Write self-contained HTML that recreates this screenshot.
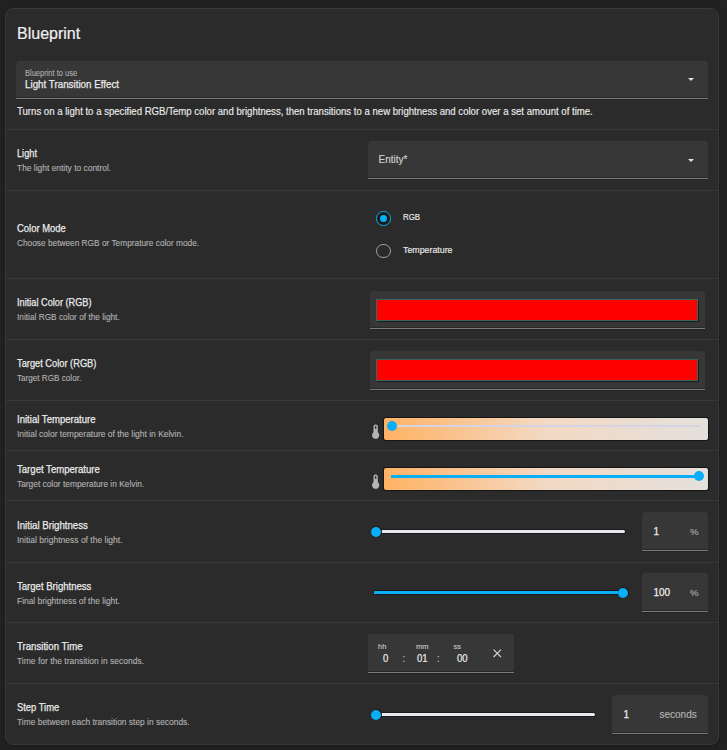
<!DOCTYPE html>
<html><head><meta charset="utf-8"><style>
html,body{margin:0;padding:0;}
body{width:727px;height:750px;background:#212121;position:relative;overflow:hidden;font-family:"Liberation Sans",sans-serif;}
.t{position:absolute;white-space:nowrap;}
</style></head><body>
<div style="position:absolute;left:5px;top:8px;width:714px;height:737px;box-sizing:border-box;border:1px solid #383838;border-radius:8px;background:#2b2b2b;box-shadow:0 1px 3px rgba(0,0,0,0.25)"></div>
<div class="t" style="left:17px;top:25.66px;font-size:16px;line-height:16px;color:#f0f0f0;font-weight:400;-webkit-text-stroke:0.2px #f0f0f0">Blueprint</div>
<div style="position:absolute;left:16px;top:60.6px;width:692px;height:38.2px;background:#373737;border-radius:4px 4px 0 0"></div>
<div style="position:absolute;left:16px;top:97.8px;width:692px;height:1px;background:#7a7a7a;box-shadow:0 -1px 0 #282828, 0 1px 0 #232323"></div>
<div class="t" style="left:25px;top:69.86px;font-size:8.2px;line-height:8.2px;color:#b0b0b0;font-weight:400;transform:scaleX(0.915);transform-origin:0 0;-webkit-text-stroke:0.1px #b0b0b0">Blueprint to use</div>
<div class="t" style="left:25px;top:79.03px;font-size:10.6px;line-height:10.6px;color:#ebebeb;font-weight:400;transform:scaleX(0.925);transform-origin:0 0;-webkit-text-stroke:0.25px #ebebeb">Light Transition Effect</div>
<div style="position:absolute;left:688.10px;top:77.8px;width:0;height:0;border-left:3.7px solid transparent;border-right:3.7px solid transparent;border-top:3.8px solid #e0e0e0"></div>
<div class="t" style="left:17px;top:105.61px;font-size:10.5px;line-height:10.5px;color:#ececec;font-weight:400;transform:scaleX(0.914);transform-origin:0 0;-webkit-text-stroke:0.15px #ececec">Turns on a light to a specified RGB/Temp color and brightness, then transitions to a new brightness and color over a set amount of time.</div>
<div style="position:absolute;left:6px;top:129px;width:712px;height:1px;background:#383838"></div>
<div style="position:absolute;left:6px;top:190px;width:712px;height:1px;background:#383838"></div>
<div style="position:absolute;left:6px;top:278px;width:712px;height:1px;background:#383838"></div>
<div style="position:absolute;left:6px;top:339px;width:712px;height:1px;background:#383838"></div>
<div style="position:absolute;left:6px;top:400px;width:712px;height:1px;background:#383838"></div>
<div style="position:absolute;left:6px;top:450px;width:712px;height:1px;background:#383838"></div>
<div style="position:absolute;left:6px;top:500px;width:712px;height:1px;background:#383838"></div>
<div style="position:absolute;left:6px;top:562px;width:712px;height:1px;background:#383838"></div>
<div style="position:absolute;left:6px;top:622px;width:712px;height:1px;background:#383838"></div>
<div style="position:absolute;left:6px;top:683px;width:712px;height:1px;background:#383838"></div>
<div class="t" style="left:17px;top:148.06px;font-size:10.8px;line-height:10.8px;color:#ececec;font-weight:400;transform:scaleX(0.8524);transform-origin:0 0;-webkit-text-stroke:0.25px #ececec">Light</div>
<div class="t" style="left:17px;top:164.48px;font-size:9.0px;line-height:9.0px;color:#b2b2b2;font-weight:400;transform:scaleX(0.9361);transform-origin:0 0;-webkit-text-stroke:0.12px #b2b2b2">The light entity to control.</div>
<div class="t" style="left:17px;top:222.56px;font-size:10.8px;line-height:10.8px;color:#ececec;font-weight:400;transform:scaleX(0.8746);transform-origin:0 0;-webkit-text-stroke:0.25px #ececec">Color Mode</div>
<div class="t" style="left:17px;top:238.98px;font-size:9.0px;line-height:9.0px;color:#b2b2b2;font-weight:400;transform:scaleX(0.9225);transform-origin:0 0;-webkit-text-stroke:0.12px #b2b2b2">Choose between RGB or Temprature color mode.</div>
<div class="t" style="left:17px;top:297.06px;font-size:10.8px;line-height:10.8px;color:#ececec;font-weight:400;transform:scaleX(0.8507);transform-origin:0 0;-webkit-text-stroke:0.25px #ececec">Initial Color (RGB)</div>
<div class="t" style="left:17px;top:313.48px;font-size:9.0px;line-height:9.0px;color:#b2b2b2;font-weight:400;transform:scaleX(0.9208);transform-origin:0 0;-webkit-text-stroke:0.12px #b2b2b2">Initial RGB color of the light.</div>
<div class="t" style="left:17px;top:358.06px;font-size:10.8px;line-height:10.8px;color:#ececec;font-weight:400;transform:scaleX(0.8592);transform-origin:0 0;-webkit-text-stroke:0.25px #ececec">Target Color (RGB)</div>
<div class="t" style="left:17px;top:374.48px;font-size:9.0px;line-height:9.0px;color:#b2b2b2;font-weight:400;transform:scaleX(0.9037);transform-origin:0 0;-webkit-text-stroke:0.12px #b2b2b2">Target RGB color.</div>
<div class="t" style="left:17px;top:413.56px;font-size:10.8px;line-height:10.8px;color:#ececec;font-weight:400;transform:scaleX(0.8872);transform-origin:0 0;-webkit-text-stroke:0.25px #ececec">Initial Temperature</div>
<div class="t" style="left:17px;top:429.98px;font-size:9.0px;line-height:9.0px;color:#b2b2b2;font-weight:400;transform:scaleX(0.9404);transform-origin:0 0;-webkit-text-stroke:0.12px #b2b2b2">Initial color temperature of the light in Kelvin.</div>
<div class="t" style="left:17px;top:463.56px;font-size:10.8px;line-height:10.8px;color:#ececec;font-weight:400;transform:scaleX(0.887);transform-origin:0 0;-webkit-text-stroke:0.25px #ececec">Target Temperature</div>
<div class="t" style="left:17px;top:479.98px;font-size:9.0px;line-height:9.0px;color:#b2b2b2;font-weight:400;transform:scaleX(0.9284);transform-origin:0 0;-webkit-text-stroke:0.12px #b2b2b2">Target color temperature in Kelvin.</div>
<div class="t" style="left:17px;top:519.56px;font-size:10.8px;line-height:10.8px;color:#ececec;font-weight:400;transform:scaleX(0.8952);transform-origin:0 0;-webkit-text-stroke:0.25px #ececec">Initial Brightness</div>
<div class="t" style="left:17px;top:535.98px;font-size:9.0px;line-height:9.0px;color:#b2b2b2;font-weight:400;transform:scaleX(0.946);transform-origin:0 0;-webkit-text-stroke:0.12px #b2b2b2">Initial brightness of the light.</div>
<div class="t" style="left:17px;top:580.56px;font-size:10.8px;line-height:10.8px;color:#ececec;font-weight:400;transform:scaleX(0.885);transform-origin:0 0;-webkit-text-stroke:0.25px #ececec">Target Brightness</div>
<div class="t" style="left:17px;top:596.98px;font-size:9.0px;line-height:9.0px;color:#b2b2b2;font-weight:400;transform:scaleX(0.9352);transform-origin:0 0;-webkit-text-stroke:0.12px #b2b2b2">Final brightness of the light.</div>
<div class="t" style="left:17px;top:641.06px;font-size:10.8px;line-height:10.8px;color:#ececec;font-weight:400;transform:scaleX(0.8934);transform-origin:0 0;-webkit-text-stroke:0.25px #ececec">Transition Time</div>
<div class="t" style="left:17px;top:657.48px;font-size:9.0px;line-height:9.0px;color:#b2b2b2;font-weight:400;transform:scaleX(0.943);transform-origin:0 0;-webkit-text-stroke:0.12px #b2b2b2">Time for the transition in seconds.</div>
<div class="t" style="left:17px;top:702.06px;font-size:10.8px;line-height:10.8px;color:#ececec;font-weight:400;transform:scaleX(0.8688);transform-origin:0 0;-webkit-text-stroke:0.25px #ececec">Step Time</div>
<div class="t" style="left:17px;top:718.48px;font-size:9.0px;line-height:9.0px;color:#b2b2b2;font-weight:400;transform:scaleX(0.9341);transform-origin:0 0;-webkit-text-stroke:0.12px #b2b2b2">Time between each transition step in seconds.</div>
<div style="position:absolute;left:368px;top:141px;width:340px;height:38px;background:#373737;border-radius:4px 4px 0 0"></div>
<div style="position:absolute;left:368px;top:178px;width:340px;height:1px;background:#7a7a7a;box-shadow:0 -1px 0 #282828, 0 1px 0 #232323"></div>
<div class="t" style="left:378.5px;top:154.53px;font-size:10px;line-height:10px;color:#cfcfcf;font-weight:400;-webkit-text-stroke:0.15px #cfcfcf">Entity*</div>
<div style="position:absolute;left:688.10px;top:159.2px;width:0;height:0;border-left:3.7px solid transparent;border-right:3.7px solid transparent;border-top:3.8px solid #e0e0e0"></div>
<div style="position:absolute;left:376.2px;top:211px;width:14.6px;height:14.6px;box-sizing:border-box;border:1.9px solid #08aef6;border-radius:50%;background:#1e1a17"></div>
<div style="position:absolute;left:379.8px;top:214.6px;width:7.4px;height:7.4px;background:#08aef6;border-radius:50%"></div>
<div style="position:absolute;left:376.2px;top:243.7px;width:14.6px;height:14.6px;box-sizing:border-box;border:1.8px solid #a2a2a2;border-radius:50%"></div>
<div class="t" style="left:403px;top:213.11px;font-size:9.2px;line-height:9.2px;color:#ececec;font-weight:400;transform:scaleX(0.86);transform-origin:0 0;-webkit-text-stroke:0.15px #ececec">RGB</div>
<div class="t" style="left:403px;top:245.81px;font-size:9.2px;line-height:9.2px;color:#ececec;font-weight:400;transform:scaleX(0.96);transform-origin:0 0;-webkit-text-stroke:0.15px #ececec">Temperature</div>
<div style="position:absolute;left:370px;top:291px;width:335px;height:38px;background:#373737;border-radius:4px 4px 0 0"></div>
<div style="position:absolute;left:370px;top:328px;width:335px;height:1px;background:#7a7a7a;box-shadow:0 -1px 0 #282828, 0 1px 0 #232323"></div>
<div style="position:absolute;left:376px;top:299px;width:322px;height:22px;box-sizing:border-box;background:#ff0000;border:1px solid #3d6262;box-shadow:0 0 1px 0.5px #1c1c1c"></div>
<div style="position:absolute;left:370px;top:351px;width:335px;height:39px;background:#373737;border-radius:4px 4px 0 0"></div>
<div style="position:absolute;left:370px;top:389px;width:335px;height:1px;background:#7a7a7a;box-shadow:0 -1px 0 #282828, 0 1px 0 #232323"></div>
<div style="position:absolute;left:376px;top:359px;width:322px;height:22px;box-sizing:border-box;background:#ff0000;border:1px solid #3d6262;box-shadow:0 0 1px 0.5px #1c1c1c"></div>
<div style="position:absolute;left:383px;top:417px;width:326px;height:24px;background:#151515;border-radius:3px"></div>
<div style="position:absolute;left:384px;top:418px;width:324px;height:22px;background:linear-gradient(to right, #ffb264, #f3d9c4 50%, #e4e0dc);border-radius:2px"></div>
<svg style="position:absolute;left:366.96px;top:422.56px" width="17.3" height="17.3" viewBox="0 0 24 24"><path d="M15 13V5A3 3 0 0 0 9 5V13A5 5 0 1 0 15 13M12 4A1 1 0 0 1 13 5V8H11V5A1 1 0 0 1 12 4Z" fill="#b4b4b4"/></svg>
<div style="position:absolute;left:391px;top:425px;width:310px;height:2px;background:#d5d3e4"></div>
<div style="position:absolute;left:387px;top:421px;width:10px;height:10px;background:#08aef6;border-radius:50%"></div>
<div style="position:absolute;left:383px;top:467px;width:326px;height:24px;background:#151515;border-radius:3px"></div>
<div style="position:absolute;left:384px;top:468px;width:324px;height:22px;background:linear-gradient(to right, #ffb264, #f3d9c4 50%, #e4e0dc);border-radius:2px"></div>
<svg style="position:absolute;left:366.96px;top:472.56px" width="17.3" height="17.3" viewBox="0 0 24 24"><path d="M15 13V5A3 3 0 0 0 9 5V13A5 5 0 1 0 15 13M12 4A1 1 0 0 1 13 5V8H11V5A1 1 0 0 1 12 4Z" fill="#b4b4b4"/></svg>
<div style="position:absolute;left:391px;top:474.5px;width:306px;height:3px;background:#08aef6"></div>
<div style="position:absolute;left:694px;top:471px;width:10px;height:10px;background:#08aef6;border-radius:50%"></div>
<div style="position:absolute;left:375px;top:529px;width:250.5px;height:5px;background:#1a1a1a;border-radius:3px"></div>
<div style="position:absolute;left:376px;top:530px;width:248.5px;height:3px;background:#ece6ee;border-radius:2px"></div>
<div style="position:absolute;left:370.5px;top:526px;width:11px;height:11px;background:#1f1612;border-radius:50%"></div>
<div style="position:absolute;left:371px;top:526.5px;width:10px;height:10px;background:#08aef6;border-radius:50%"></div>
<div style="position:absolute;left:642px;top:512px;width:66px;height:39px;background:#373737;border-radius:4px 4px 0 0"></div>
<div style="position:absolute;left:642px;top:550px;width:66px;height:1px;background:#7a7a7a;box-shadow:0 -1px 0 #282828, 0 1px 0 #232323"></div>
<div class="t" style="left:653.5px;top:526.53px;font-size:10px;line-height:10px;color:#ececec;font-weight:400;-webkit-text-stroke:0.25px #ececec">1</div>
<div class="t" style="left:690px;top:527.47px;font-size:9.6px;line-height:9.6px;color:#b4b4b4;font-weight:400;-webkit-text-stroke:0.1px #b4b4b4">%</div>
<div style="position:absolute;left:373px;top:590px;width:251px;height:5px;background:#1a1a1a;border-radius:3px"></div>
<div style="position:absolute;left:374px;top:591px;width:249px;height:3px;background:#ece6ee;border-radius:2px"></div>
<div style="position:absolute;left:374px;top:591px;width:249px;height:3px;background:#08aef6;border-radius:2px"></div>
<div style="position:absolute;left:617.5px;top:587px;width:11px;height:11px;background:#1f1612;border-radius:50%"></div>
<div style="position:absolute;left:618px;top:587.5px;width:10px;height:10px;background:#08aef6;border-radius:50%"></div>
<div style="position:absolute;left:642px;top:573px;width:66px;height:39px;background:#373737;border-radius:4px 4px 0 0"></div>
<div style="position:absolute;left:642px;top:611px;width:66px;height:1px;background:#7a7a7a;box-shadow:0 -1px 0 #282828, 0 1px 0 #232323"></div>
<div class="t" style="left:653.5px;top:587.53px;font-size:10px;line-height:10px;color:#ececec;font-weight:400;-webkit-text-stroke:0.25px #ececec">100</div>
<div class="t" style="left:690px;top:588.47px;font-size:9.6px;line-height:9.6px;color:#b4b4b4;font-weight:400;-webkit-text-stroke:0.1px #b4b4b4">%</div>
<div style="position:absolute;left:368px;top:634px;width:146px;height:39px;background:#373737;border-radius:2px 2px 0 0"></div>
<div style="position:absolute;left:368px;top:672px;width:146px;height:1px;background:#7a7a7a;box-shadow:0 -1px 0 #282828, 0 1px 0 #232323"></div>
<div class="t" style="left:378px;top:642.85px;font-size:7.5px;line-height:7.5px;color:#c2c2c2;font-weight:400;-webkit-text-stroke:0.15px #c2c2c2">hh</div>
<div class="t" style="left:382.5px;top:653.03px;font-size:10.6px;line-height:10.6px;color:#ececec;font-weight:400;transform:scaleX(0.9);transform-origin:0 0;-webkit-text-stroke:0.2px #ececec">0</div>
<div class="t" style="left:402.3px;top:653.19px;font-size:11px;line-height:11px;color:#b0b0b0;font-weight:400;-webkit-text-stroke:0.2px #b0b0b0">:</div>
<div class="t" style="left:416px;top:642.85px;font-size:7.5px;line-height:7.5px;color:#c2c2c2;font-weight:400;-webkit-text-stroke:0.15px #c2c2c2">mm</div>
<div class="t" style="left:416.5px;top:653.03px;font-size:10.6px;line-height:10.6px;color:#ececec;font-weight:400;transform:scaleX(0.9);transform-origin:0 0;-webkit-text-stroke:0.2px #ececec">01</div>
<div class="t" style="left:436.8px;top:653.19px;font-size:11px;line-height:11px;color:#b0b0b0;font-weight:400;-webkit-text-stroke:0.2px #b0b0b0">:</div>
<div class="t" style="left:453.5px;top:642.85px;font-size:7.5px;line-height:7.5px;color:#c2c2c2;font-weight:400;-webkit-text-stroke:0.15px #c2c2c2">ss</div>
<div class="t" style="left:456.5px;top:653.03px;font-size:10.6px;line-height:10.6px;color:#ececec;font-weight:400;transform:scaleX(0.9);transform-origin:0 0;-webkit-text-stroke:0.2px #ececec">00</div>
<svg style="position:absolute;left:492.5px;top:648.5px" width="9" height="9" viewBox="0 0 9 9"><path d="M0.6 0.6L8 8M8 0.6L0.6 8" stroke="#d4d4d4" stroke-width="1.15"/></svg>
<div style="position:absolute;left:375px;top:712px;width:220.5px;height:5px;background:#1a1a1a;border-radius:3px"></div>
<div style="position:absolute;left:376px;top:713px;width:218.5px;height:3px;background:#ece6ee;border-radius:2px"></div>
<div style="position:absolute;left:370.5px;top:709px;width:11px;height:11px;background:#1f1612;border-radius:50%"></div>
<div style="position:absolute;left:371px;top:709.5px;width:10px;height:10px;background:#08aef6;border-radius:50%"></div>
<div style="position:absolute;left:612px;top:695px;width:96px;height:39px;background:#373737;border-radius:4px 4px 0 0"></div>
<div style="position:absolute;left:612px;top:733px;width:96px;height:1px;background:#7a7a7a;box-shadow:0 -1px 0 #282828, 0 1px 0 #232323"></div>
<div class="t" style="left:623.5px;top:710.13px;font-size:10px;line-height:10px;color:#ececec;font-weight:400;-webkit-text-stroke:0.25px #ececec">1</div>
<div class="t" style="left:659.5px;top:710.13px;font-size:10px;line-height:10px;color:#b4b4b4;font-weight:400;-webkit-text-stroke:0.15px #b4b4b4">seconds</div>
</body></html>
